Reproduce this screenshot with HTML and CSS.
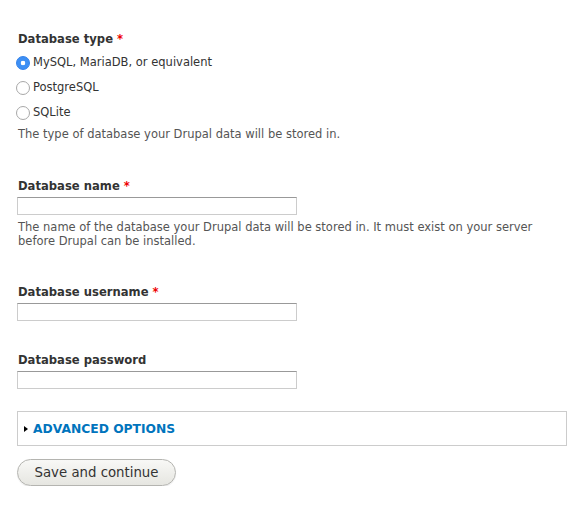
FILE: index.html
```html
<!DOCTYPE html>
<html>
<head>
<meta charset="utf-8">
<link rel="stylesheet" href="styles.css">
</head>
<body>
<form class="form">
  <fieldset class="radios">
    <div class="label">Database type <span class="req">*</span></div>
    <label class="radio"><input type="radio" name="db" checked><span>MySQL, MariaDB, or equivalent</span></label>
    <label class="radio"><input type="radio" name="db"><span>PostgreSQL</span></label>
    <label class="radio"><input type="radio" name="db"><span>SQLite</span></label>
    <div class="desc">The type of database your Drupal data will be stored in.</div>
  </fieldset>

  <div class="item item-name">
    <div class="label">Database name <span class="req">*</span></div>
    <input class="text" type="text">
    <div class="desc">The name of the database your Drupal data will be stored in. It must exist on your server before Drupal can be installed.</div>
  </div>

  <div class="item item-user">
    <div class="label">Database username <span class="req">*</span></div>
    <input class="text" type="text">
  </div>

  <div class="item item-pass">
    <div class="label">Database password</div>
    <input class="text" type="password">
  </div>

  <div class="details">
    <span class="tri"></span><span class="summary">ADVANCED OPTIONS</span>
  </div>

  <button type="button" class="btn">Save and continue</button>
</form>
</body>
</html>
```
FILE: styles.css
```css
html, body {
  margin: 0;
  padding: 0;
  background: #fff;
}
body {
  font-family: "DejaVu Sans", sans-serif;
  font-size: 11.5px;
  color: #333;
}
.form {
  padding: 31px 0 0 17px;
  width: 550px;
}
.radios {
  border: 0;
  margin: 0;
  padding: 0;
}
.label {
  font-weight: bold;
  font-size: 11.6px;
  line-height: 16px;
  color: #333;
  margin-left: 1px;
}
.req {
  color: #e00;
}
.radio {
  display: flex;
  align-items: center;
  height: 25px;
  color: #333;
}
.radios .label {
  margin-bottom: 2px;
}
.radio input {
  appearance: none;
  -webkit-appearance: none;
  margin: 0 3px 0 -1px;
  width: 14px;
  height: 14px;
  border-radius: 50%;
  border: 1px solid #a8a8a8;
  background: #fff;
  box-sizing: border-box;
  position: relative;
  top: 1px;
}
.radio input:checked {
  border-color: #2f80ea;
  background: radial-gradient(circle, #fff 0 2px, #3d8ff4 2.6px);
}
.desc {
  color: #555;
  line-height: 14px;
  margin-left: 1px;
  margin-top: 3px;
}
.item-name {
  margin-top: 37px;
}
.text {
  display: block;
  width: 280px;
  height: 18px;
  box-sizing: border-box;
  margin: 3px 0 0 0;
  padding: 0 3px;
  border: 1px solid #ccc;
  border-top-color: #999;
  font: inherit;
}
.item-name .desc {
  margin-top: 5px;
}
.item-user {
  margin-top: 36px;
}
.item-pass {
  margin-top: 31px;
}
.details {
  margin-top: 22px;
  height: 35px;
  width: 550px;
  box-sizing: border-box;
  border: 1px solid #ccc;
  display: flex;
  align-items: center;
  padding-left: 6px;
}
.tri {
  width: 0;
  height: 0;
  border-left: 4px solid #000;
  border-top: 3.5px solid transparent;
  border-bottom: 3.5px solid transparent;
  margin-right: 5px;
}
.summary {
  color: #0074bd;
  font-weight: bold;
  font-size: 12.3px;
}
.btn {
  display: block;
  margin-top: 13px;
  width: 159px;
  height: 27px;
  border: 1px solid #b4b4b0;
  border-radius: 14px;
  background: linear-gradient(to bottom, #f8f8f6, #e6e6e1);
  color: #333;
  font-family: "DejaVu Sans", sans-serif;
  font-size: 13.3px;
  padding: 0;
  box-shadow: 0 1px 1px rgba(0,0,0,0.08);
}
```
